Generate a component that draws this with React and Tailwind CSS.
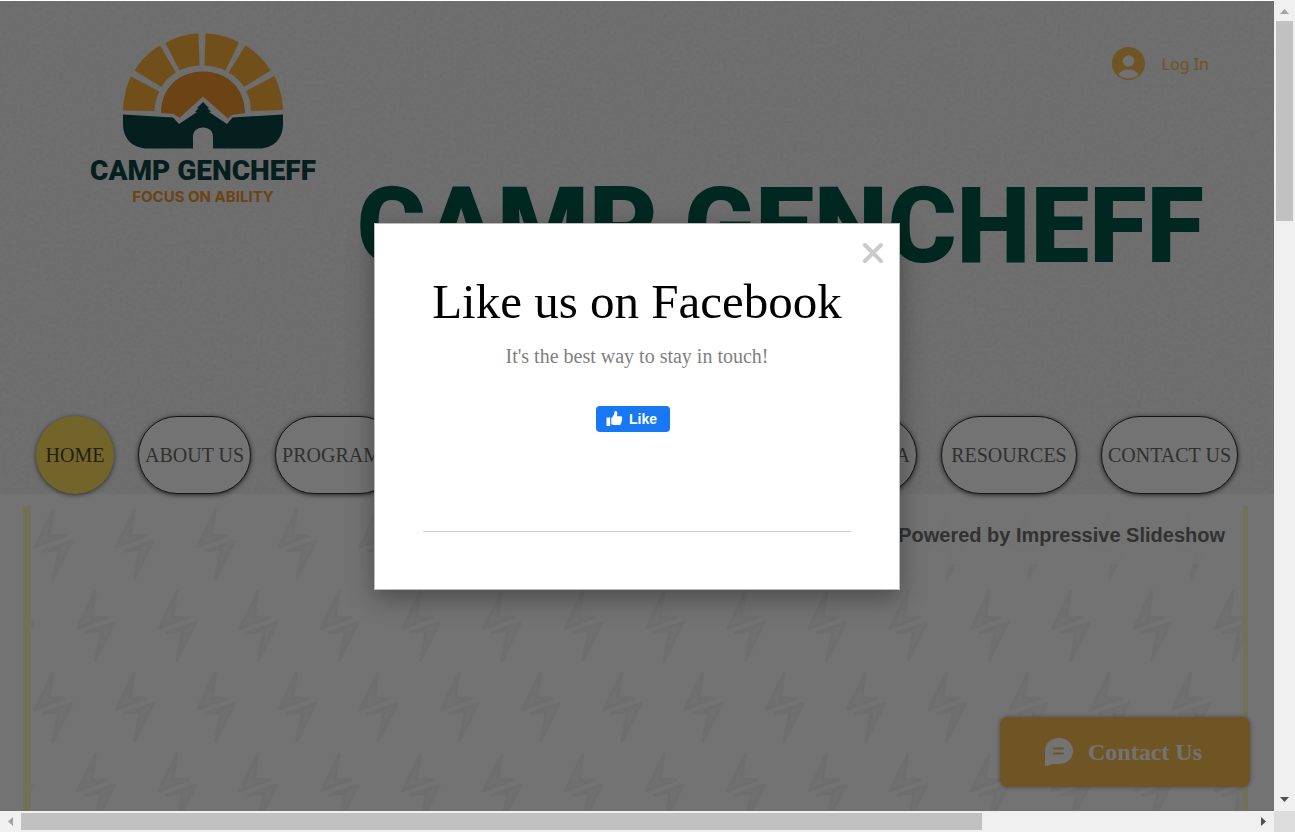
import React from "react";

const navPill =
  "flex h-[78px] items-center justify-center rounded-full border border-[#303030] bg-white px-[6px] text-xl text-[#6c6c6c] whitespace-nowrap shadow-[0_1px_5px_rgba(0,0,0,0.7)]";

function Grain() {
  return (
    <svg className="absolute inset-0 h-full w-full opacity-10" aria-hidden="true">
      <filter id="grain">
        <feTurbulence type="fractalNoise" baseFrequency="0.3" numOctaves="2" stitchTiles="stitch" />
        <feColorMatrix type="saturate" values="0" />
        <feComponentTransfer>
          <feFuncA type="linear" slope="0" intercept="1" />
        </feComponentTransfer>
      </filter>
      <rect width="100%" height="100%" filter="url(#grain)" />
    </svg>
  );
}

function Logo() {
  return (
    <a href="#home" className="flex w-[228px] flex-col items-center">
      <svg width="162" height="116" viewBox="0 0 162 116" aria-hidden="true">
        <g fill="#fab03b">
          <path d="M1 77.5 C1.500 65 4 53.500 9 43.500 L37.500 58.500 C34.500 64 33 70.500 32.500 78 Z" />
          <path d="M12.500 37.500 C19 27 28 18.500 38 12.500 L54 39.500 C48 43 43 48 39.500 54 Z" />
          <path d="M43.500 10 C53 4 65 1 76.500 0.500 L77.500 32.500 C70 33 63.500 34.500 57.500 37.500 Z" />
          <path d="M161 77 C160.500 65 157.500 53 152.500 43 L124 58 C127 64 129 71 129 78 Z" />
          <path d="M148.500 37.500 C142 27 134 18.500 123.500 12.500 L106.500 39.500 C113 43 118 48 122 54 Z" />
          <path d="M117 9.500 C107 4 96 1 83.500 0.500 L82.500 32.500 C90 33 97 34.500 103.500 37.500 Z" />
        </g>
        <path
          fill="#ed9430"
          d="M39 80 C39 55 57 38.500 81 38.500 C105 38.500 123 55 123 80 L110 82 L106 85.500 L81 63.500 L57.500 85 L52 81 Z"
        />
        <path
          fill="#0d4644"
          d="M1 81.500 L51 84.500 L57 91 L75 79 L73 78.500 L76.500 75.500 L75 75 L81 69 L87 75 L85.500 75.500 L89 78.500 L87 79 L105 91 L110.500 84.500 L161 81.500 V91 C161 106 151 115.500 137 115.500 H91 V104 C91 98 87 94.500 81 94.500 C75 94.500 71 98 71 104 V115.500 H26 C11 115.500 1 106 1 91 Z"
        />
      </svg>
      <span className="mt-1 font-['Roboto',sans-serif] text-[28px] leading-9 font-black whitespace-nowrap text-[#0d4644]">
        CAMP GENCHEFF
      </span>
      <span className="font-['Inter',sans-serif] text-[15px] leading-4 font-bold whitespace-nowrap text-[#ed9430]">
        FOCUS ON ABILITY
      </span>
    </a>
  );
}

function Header() {
  return (
    <header className="relative bg-[#fafafa] font-['Liberation_Serif',serif]">
      <Grain />
      <div className="relative flex h-[415px] justify-between pt-8 pr-[65px] pl-[89px]">
        <Logo />
        <div className="flex flex-col items-end">
          <button className="mt-[14px] flex items-center gap-[17px] font-['Noto_Sans',sans-serif] text-base text-[#fab94f]">
            <svg width="33" height="33" viewBox="0 0 33 33" aria-hidden="true">
              <circle cx="16.500" cy="16.500" r="16.500" fill="#f7bb50" />
              <circle cx="16.500" cy="14" r="5.800" fill="#fafafa" />
              <path d="M6.500 28 C8 20.500 25 20.500 26.500 28 C21 32.500 12 32.500 6.500 28 Z" fill="#fafafa" />
            </svg>
            Log In
          </button>
          <h1 className="mt-[87px] mr-[5px] font-['Roboto',sans-serif] text-[105px] leading-[120px] font-black whitespace-nowrap text-[#005947]">
            CAMP GENCHEFF
          </h1>
        </div>
      </div>
      <nav className="relative flex gap-6 pr-9 pl-9">
        <a
          href="#home"
          className="flex h-[78px] w-[78px] items-center justify-center rounded-full bg-[#ffe05d] text-xl text-[#504628] shadow-[0_1px_5px_rgba(0,0,0,0.6)]"
        >
          HOME
        </a>
        <a href="#about" className={navPill}>ABOUT US</a>
        <a href="#programs" className={navPill}>PROGRAMS</a>
        <a href="#media" className={navPill + " ml-auto"}>MEDIA</a>
        <a href="#resources" className={navPill + " min-w-[136px]"}>RESOURCES</a>
        <a href="#contact" className={navPill + " min-w-[136px]"}>CONTACT US</a>
      </nav>
    </header>
  );
}

function Bolt({ x, y }) {
  return (
    <g transform={`translate(${x} ${y})`} fill="#f8f8f8" stroke="#f4f4f4" strokeWidth="3" strokeLinejoin="round">
      <path d="M20 2 L2 39 L17 33 L32 28 H16 Z" />
      <path d="M10 43 L39 33 L20 71 L26 41 Z" />
    </g>
  );
}

function Slideshow() {
  return (
    <section className="flex flex-1 pt-3 pr-[26px] pl-[23px]">
      <div className="relative flex-1 overflow-hidden border-r-[5px] border-l-8 border-[#fafac4]">
        <svg className="absolute inset-0 h-full w-full" aria-hidden="true">
          <defs>
            <pattern id="bolts" width="81.250" height="162.500" patternUnits="userSpaceOnUse">
              <Bolt x={2} y={2} />
              <Bolt x={44.500} y={83.500} />
              <Bolt x={-36.750} y={83.500} />
            </pattern>
          </defs>
          <rect width="100%" height="100%" fill="url(#bolts)" />
        </svg>
        <div className="relative flex justify-end">
          <p className="bg-white/80 px-[18px] py-[14px] font-['Liberation_Sans',sans-serif] text-xl leading-[30px] font-bold text-[#707070]">
            Powered by Impressive Slideshow
          </p>
        </div>
      </div>
    </section>
  );
}

function Dialog() {
  return (
    <div
      role="dialog"
      aria-labelledby="dialog-title"
      className="relative flex w-[526px] flex-col items-center border border-[#bcbcbc] bg-white px-12 pt-12 pb-[57px] font-['Liberation_Serif',serif] shadow-[0_8px_24px_rgba(0,0,0,0.35)]"
    >
      <button aria-label="Close" className="absolute top-[17px] right-[14px]">
        <svg width="24" height="24" viewBox="0 0 24 24" aria-hidden="true">
          <path d="M4 4 L20 20 M20 4 L4 20" stroke="#cbcbcb" strokeWidth="4" strokeLinecap="round" />
        </svg>
      </button>
      <h2 id="dialog-title" className="text-[49px] leading-[60px] whitespace-nowrap text-black">
        Like us on Facebook
      </h2>
      <p className="mt-3 text-xl leading-6 text-[#7f7f7f]">It's the best way to stay in touch!</p>
      <button className="mt-[38px] mr-2 flex h-[26px] w-[74px] items-center gap-[6px] rounded-[4px] bg-[#1877f2] pl-[10px] font-['Liberation_Sans',sans-serif] text-sm font-bold text-white">
        <svg width="17" height="17" viewBox="0 0 17 17" fill="currentColor" aria-hidden="true">
          <path d="M0.500 7.500 H4.200 V16 H0.500 Z" />
          <path d="M5.300 8 C7.800 6.500 8.200 4 8.600 1.600 C8.800 0.400 11.400 0.600 11.300 3.300 C11.300 4.500 11 5.500 10.700 6.200 H14.600 C16.200 6.200 16.600 7.600 15.800 8.500 C16.500 9.200 16.300 10.300 15.600 10.800 C16 11.700 15.700 12.500 14.900 13 C15 14.400 14.300 15 13 15 H8.500 C7.200 15 6.500 14.300 5.300 14.200 Z" />
        </svg>
        Like
      </button>
      <hr className="mt-[99px] w-full border-[#cfcfcf]" />
    </div>
  );
}

function Viewport() {
  return (
    <main className="relative flex min-h-0 min-w-0 flex-col overflow-hidden bg-white pt-px">
      <Header />
      <Slideshow />
      <button className="absolute right-6 bottom-6 flex h-[70px] w-[250px] items-center justify-center gap-[14px] rounded-lg bg-[#f7bb50] pr-1 font-['Liberation_Serif',serif] text-2xl font-bold text-white shadow-[0_0_5px_rgba(0,0,0,0.35)]">
        <svg width="30" height="30" viewBox="0 0 30 30" aria-hidden="true">
          <path
            fill="#fff"
            d="M1 29 V14 C1 6.500 7 1 15 1 C23 1 29 6.500 29 14 C29 21.500 23 27 15 27 H11 C7 27 5 29 1 29 Z"
          />
          <path d="M10 11.500 H19 M10 16.500 H19" stroke="#f7bb50" strokeWidth="2.200" strokeLinecap="round" />
        </svg>
        Contact Us
      </button>
      <div className="absolute inset-x-0 top-px bottom-0 flex items-center justify-center bg-black/55">
        <Dialog />
      </div>
    </main>
  );
}

export default function App() {
  return (
    <div className="grid h-screen grid-cols-[1fr_21px] grid-rows-[1fr_21px] bg-[#f0f0f0]">
      <Viewport />
      <div className="flex flex-col items-center">
        <svg width="21" height="21" viewBox="0 0 21 21" aria-hidden="true">
          <path d="M6 14 L10.500 9 L15 14 Z" fill="#a3a3a3" />
        </svg>
        <div className="min-h-0 w-[17px] flex-1">
          <div className="h-[26%] bg-[#c1c1c1]" />
        </div>
        <svg width="21" height="21" viewBox="0 0 21 21" aria-hidden="true">
          <path d="M6 7 L10.500 12 L15 7 Z" fill="#505050" />
        </svg>
      </div>
      <div className="flex items-center">
        <svg width="21" height="21" viewBox="0 0 21 21" aria-hidden="true">
          <path d="M13 6 L8 10.500 L13 15 Z" fill="#a3a3a3" />
        </svg>
        <div className="h-[17px] flex-1">
          <div className="h-full w-[78%] bg-[#c1c1c1]" />
        </div>
        <svg width="21" height="21" viewBox="0 0 21 21" aria-hidden="true">
          <path d="M8 6 L13 10.500 L8 15 Z" fill="#505050" />
        </svg>
      </div>
      <div className="bg-[#dcdcdc]" />
    </div>
  );
}
